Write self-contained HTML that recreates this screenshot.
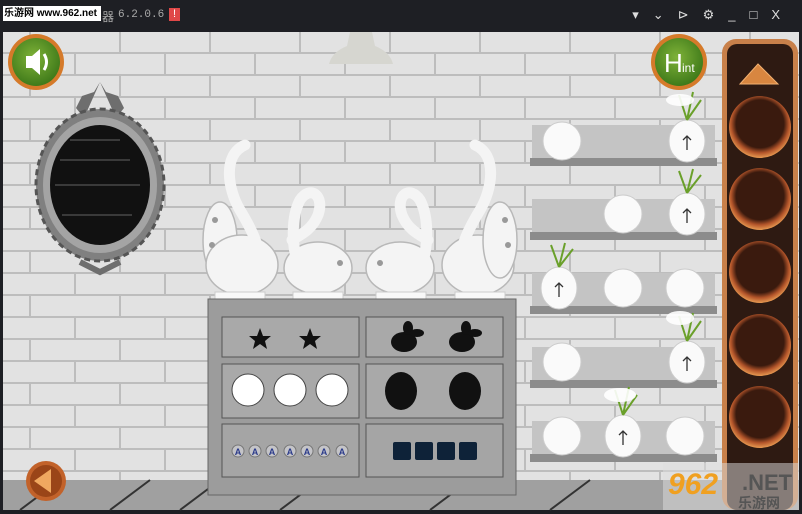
<!DOCTYPE html>
<html><head><meta charset="utf-8"><style>
html,body{margin:0;padding:0;width:802px;height:514px;overflow:hidden;background:#1e1f24}
.tb{position:absolute;left:0;top:0;width:802px;height:32px;background:#1e1f24;font-family:"Liberation Sans","Noto Sans CJK SC",sans-serif}
</style></head><body>
<div class="tb">
<div style="position:absolute;left:3px;top:6px;height:15px;width:96px;background:#fff;color:#000;font-size:10px;font-weight:bold;line-height:15px;padding:0 1px;white-space:nowrap;overflow:hidden">乐游网 www.962.net</div>
<div style="position:absolute;left:102px;top:8px;color:#aaa;font-size:12px;font-family:'Noto Sans CJK SC',sans-serif">器</div>
<div style="position:absolute;left:118px;top:9px;color:#aaa;font-size:11px;font-family:'Liberation Mono',monospace;white-space:nowrap">6.2.0.6</div>
<div style="position:absolute;left:169px;top:8px;width:11px;height:13px;background:#e04848;color:#fff;font-size:11px;text-align:center;line-height:13px">!</div>
<div style="position:absolute;right:8px;top:7px;color:#ddd;font-size:13px;letter-spacing:14px">▾⌄⊳⚙_□X</div>
</div>
<svg style="position:absolute;left:0;top:32px" width="802" height="482" viewBox="0 32 802 482">
<defs>
<pattern id="br" x="0" y="32" width="90" height="44" patternUnits="userSpaceOnUse">
<rect width="90" height="44" fill="#eaeaea"/>
<path d="M0 21H90M0 43H90M30 0V21M75 22V43" stroke="#c4c4c4" stroke-width="2"/>
</pattern>
<radialGradient id="sl" cx="50%" cy="45%" r="55%"><stop offset="0" stop-color="#3a1a0e"/><stop offset="0.7" stop-color="#3a1a0e"/><stop offset="0.85" stop-color="#b4552a"/><stop offset="1" stop-color="#e79a52"/></radialGradient>
<radialGradient id="gb" cx="45%" cy="40%" r="60%"><stop offset="0" stop-color="#7fb238"/><stop offset="1" stop-color="#3f7a1a"/></radialGradient>
</defs>
<rect x="0" y="32" width="802" height="482" fill="#1e1f24"/>
<rect x="3" y="32" width="796" height="478" fill="url(#br)"/>
<rect x="3" y="32" width="796" height="478" fill="#000" opacity="0.03"/>
<rect x="3" y="480" width="796" height="30" fill="#a0a0a0"/>
<path d="M20 510L60 480M110 510L150 480M180 510L220 480M280 510L320 480M430 510L470 480M550 510L590 480" stroke="#333" stroke-width="2"/>
<path d="M350 32h22l3 14c10 4 16 10 18 18h-64c2-8 8-14 18-18z" fill="#d6d6d0"/>
<circle cx="36" cy="62" r="28" fill="#d57a2a"/><circle cx="36" cy="62" r="24" fill="url(#gb)"/>
<path d="M26 56h6l8-7v26l-8-7h-6z" fill="#fff"/><path d="M44 54q5 8 0 16" stroke="#fff" stroke-width="3" fill="none"/>
<circle cx="679" cy="62" r="28" fill="#d57a2a"/><circle cx="679" cy="62" r="24" fill="url(#gb)"/>
<text x="664" y="72" fill="#fff" font-family="Liberation Sans" font-size="26">H</text><text x="682" y="72" fill="#fff" font-family="Liberation Sans" font-size="12">int</text>
<path d="M100 82l6 10 12 4 6 12 -8 10z M100 82l-6 10-12 4-6 12 8 10z" fill="#6e6e6e"/>
<ellipse cx="100" cy="185" rx="64" ry="76" fill="#808080" stroke="#555" stroke-width="3" stroke-dasharray="6 4"/>
<ellipse cx="100" cy="185" rx="57" ry="68" fill="#a4a4a4"/>
<ellipse cx="100" cy="185" rx="50" ry="60" fill="#111"/>
<path d="M60 160h70M55 185h85M62 215h70M70 140h50" stroke="#3a3a3a" stroke-width="2"/>
<path d="M80 262l20 10 20-10" stroke="#6e6e6e" stroke-width="6" fill="none"/>
<g fill="#f4f4f4" stroke="#b8b8b8" stroke-width="1.5">
<ellipse cx="220" cy="240" rx="17" ry="38"/>
<ellipse cx="242" cy="265" rx="36" ry="30"/>
<ellipse cx="318" cy="268" rx="34" ry="26"/>
<ellipse cx="400" cy="268" rx="34" ry="26"/>
<ellipse cx="478" cy="265" rx="36" ry="30"/>
<ellipse cx="500" cy="240" rx="17" ry="38"/>
</g>
<g fill="none" stroke="#f4f4f4" stroke-width="11" stroke-linecap="round">
<path d="M245 145C222 155 228 190 240 210C255 235 262 250 258 275"/>
<path d="M475 145C498 155 492 190 480 210C465 235 458 250 462 275"/>
<path d="M300 270C290 245 292 215 300 200C310 185 325 195 318 215C312 230 300 235 292 240"/>
<path d="M420 270C430 245 428 215 420 200C410 185 395 195 402 215C408 230 420 235 428 240"/>
</g>
<g fill="#999"><circle cx="215" cy="220" r="3"/><circle cx="212" cy="245" r="3"/><circle cx="505" cy="220" r="3"/><circle cx="508" cy="245" r="3"/><circle cx="340" cy="263" r="3"/><circle cx="380" cy="263" r="3"/></g>
<g fill="#f8f8f8" stroke="#ccc"><rect x="215" y="292" width="50" height="7"/><rect x="293" y="292" width="50" height="7"/><rect x="376" y="292" width="50" height="7"/><rect x="455" y="292" width="50" height="7"/></g>
<rect x="208" y="299" width="308" height="196" fill="#9c9c9c" stroke="#666"/>
<rect x="222" y="317" width="137" height="40" fill="#a9a9a9" stroke="#555"/>
<rect x="366" y="317" width="137" height="40" fill="#a9a9a9" stroke="#555"/>
<rect x="222" y="364" width="137" height="54" fill="#a9a9a9" stroke="#555"/>
<rect x="366" y="364" width="137" height="54" fill="#a9a9a9" stroke="#555"/>
<rect x="222" y="424" width="137" height="53" fill="#a5a5a5" stroke="#555"/>
<rect x="366" y="424" width="137" height="53" fill="#a5a5a5" stroke="#555"/>
<g fill="#111">
<path d="M260 328l3 8 8 0-6 5 2 8-7-5-7 5 2-8-6-5 8 0z"/>
<path d="M310 328l3 8 8 0-6 5 2 8-7-5-7 5 2-8-6-5 8 0z"/>
<ellipse cx="404" cy="342" rx="13" ry="10"/><ellipse cx="408" cy="328" rx="5" ry="7"/><ellipse cx="417" cy="333" rx="7" ry="4"/>
<ellipse cx="462" cy="342" rx="13" ry="10"/><ellipse cx="466" cy="328" rx="5" ry="7"/><ellipse cx="475" cy="333" rx="7" ry="4"/>
<ellipse cx="401" cy="391" rx="16" ry="19"/><ellipse cx="465" cy="391" rx="16" ry="19"/>
</g>
<g fill="#fff" stroke="#444"><circle cx="248" cy="390" r="16"/><circle cx="290" cy="390" r="16"/><circle cx="332" cy="390" r="16"/></g>
<g fill="#0e2238"><rect x="393" y="442" width="18" height="18" rx="2"/><rect x="415" y="442" width="18" height="18" rx="2"/><rect x="437" y="442" width="18" height="18" rx="2"/><rect x="459" y="442" width="18" height="18" rx="2"/></g>
<g fill="#c4c4c8" stroke="#777">
<circle cx="238" cy="451" r="6"/><circle cx="255" cy="451" r="6"/><circle cx="272" cy="451" r="6"/><circle cx="290" cy="451" r="6"/><circle cx="307" cy="451" r="6"/><circle cx="324" cy="451" r="6"/><circle cx="342" cy="451" r="6"/>
</g>
<g fill="#2a3a8a" font-family="Liberation Sans" font-size="9" font-weight="bold" text-anchor="middle">
<text x="238" y="455">A</text><text x="255" y="455">A</text><text x="272" y="455">A</text><text x="290" y="455">A</text><text x="307" y="455">A</text><text x="324" y="455">A</text><text x="342" y="455">A</text></g>
<g>
<rect x="532" y="125" width="183" height="33" fill="#c4c4c4"/><rect x="530" y="158" width="187" height="8" fill="#8c8c8c"/>
<rect x="532" y="199" width="183" height="33" fill="#c4c4c4"/><rect x="530" y="232" width="187" height="8" fill="#8c8c8c"/>
<rect x="532" y="273" width="183" height="33" fill="#c4c4c4"/><rect x="530" y="306" width="187" height="8" fill="#8c8c8c"/>
<rect x="532" y="347" width="183" height="33" fill="#c4c4c4"/><rect x="530" y="380" width="187" height="8" fill="#8c8c8c"/>
<rect x="532" y="421" width="183" height="33" fill="#c4c4c4"/><rect x="530" y="454" width="187" height="8" fill="#8c8c8c"/>
</g>
<g fill="#fafafa" stroke="#ccc">
<circle cx="562" cy="141" r="19"/><circle cx="623" cy="214" r="19"/><circle cx="623" cy="288" r="19"/><circle cx="685" cy="288" r="19"/><circle cx="562" cy="362" r="19"/><circle cx="562" cy="436" r="19"/><circle cx="685" cy="436" r="19"/>
<ellipse cx="687" cy="141" rx="18" ry="21"/><ellipse cx="687" cy="214" rx="18" ry="21"/><ellipse cx="559" cy="288" rx="18" ry="21"/><ellipse cx="687" cy="362" rx="18" ry="21"/><ellipse cx="623" cy="436" rx="18" ry="21"/>
</g>
<g stroke="#6aa02a" stroke-width="2" fill="none">
<path d="M687 120l-8-25M687 120l6-28M687 120l14-20"/><path d="M687 193l-8-22M687 193l6-24M687 193l14-18"/><path d="M559 267l-8-22M559 267l6-24M559 267l14-18"/><path d="M687 341l-8-25M687 341l6-28M687 341l14-20"/><path d="M623 415l-8-25M623 415l6-28M623 415l14-20"/>
</g>
<g fill="#fff" opacity="0.9"><ellipse cx="680" cy="100" rx="14" ry="6"/><ellipse cx="680" cy="318" rx="14" ry="7"/><ellipse cx="620" cy="395" rx="16" ry="7"/></g>
<g stroke="#333" stroke-width="1.3" fill="none"><path d="M687 150v-14m-4 4l4-4 4 4M687 223v-14m-4 4l4-4 4 4M559 297v-14m-4 4l4-4 4 4M687 371v-14m-4 4l4-4 4 4M623 445v-14m-4 4l4-4 4 4"/></g>
<rect x="722" y="39" width="76" height="471" rx="14" fill="#c8804a"/>
<rect x="727" y="44" width="66" height="466" rx="10" fill="#2e1a12"/>
<path d="M740 84l18-20 20 20z" fill="#d88640" stroke="#f2b070"/>
<g fill="url(#sl)"><circle cx="760" cy="127" r="31"/><circle cx="760" cy="199" r="31"/><circle cx="760" cy="272" r="31"/><circle cx="760" cy="345" r="31"/><circle cx="760" cy="417" r="31"/></g>
<circle cx="46" cy="481" r="20" fill="#c2622a"/><circle cx="46" cy="481" r="16" fill="#9a4518"/>
<path d="M34 481l17-12v24z" fill="#f0a860"/>
<rect x="663" y="463" width="136" height="47" fill="#ddd" opacity="0.5"/>
<text x="668" y="494" fill="#f0a020" font-family="Liberation Sans" font-size="30" font-weight="bold" font-style="italic">962</text>
<text x="742" y="490" fill="#555" font-family="Liberation Sans" font-size="22" font-weight="bold">.NET</text>
<text x="738" y="508" fill="#555" font-family="Noto Sans CJK SC,sans-serif" font-size="14" font-weight="bold">乐游网</text>
</svg>
</body></html>
